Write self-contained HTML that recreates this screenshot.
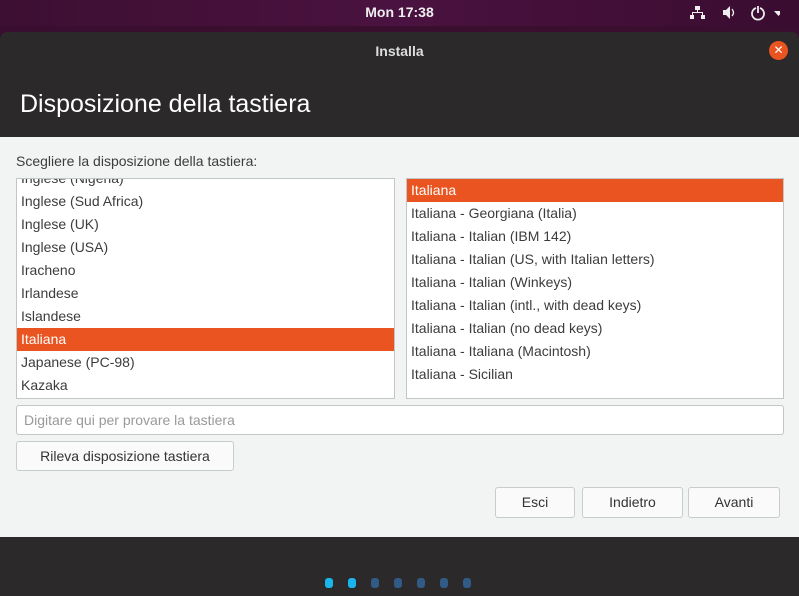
<!DOCTYPE html>
<html><head><style>
*{box-sizing:border-box;margin:0;padding:0}
body{width:799px;height:596px;overflow:hidden;background:#3a0e2e;font-family:"Liberation Sans","DejaVu Sans",sans-serif;position:relative;font-size:14px;color:#3c3c3c}
.top{position:absolute;left:0;top:0;width:799px;height:26px;background:linear-gradient(90deg,#3d0f32,#4a1240 50%,#3a0c30);}
.clock{position:absolute;left:0;width:799px;top:4px;text-align:center;color:#eee;font-size:14px;font-weight:bold}
.win{position:absolute;left:0;top:32px;width:799px;height:564px;background:#2b2929;border-radius:7px 7px 0 0}
.ttl{position:absolute;top:11px;width:100%;text-align:center;color:#ddd;font-weight:bold;font-size:14px}
.close{position:absolute;left:769px;top:9px;width:19px;height:19px;border-radius:50%;background:#e95420;color:#fff;font-size:12px;text-align:center;line-height:19px}
h1{position:absolute;left:20px;top:58px;color:#fff;font-weight:normal;font-size:25px}
.content{position:absolute;left:0;top:105px;width:799px;height:400px;background:#f2f3f3}
.a{position:absolute}
.list{position:absolute;background:#fff;border:1px solid #c2c6c6;overflow:hidden}
.row{position:absolute;left:0;right:0;height:23px;line-height:23px;padding-left:4px;white-space:nowrap}
.sel{background:#e95420;color:#fff}
.btn{position:absolute;border:1px solid #c7cccc;border-radius:3px;background:#fafafa;text-align:center;line-height:28px;color:#333}
.dot{position:absolute;top:578px;width:8px;height:10px;border-radius:3px;background:#325a86}
</style></head><body>
<div class="top"><div class="clock">Mon 17:38</div>
<svg class="a" style="left:690px;top:5px" width="90" height="16"><g fill="#eee"><rect x="5" y="1" width="5" height="4"/><rect x="7" y="5" width="1" height="3"/><rect x="2" y="7" width="11" height="1"/><rect x="2" y="7" width="1" height="3"/><rect x="12" y="7" width="1" height="3"/><rect x="0" y="10" width="4" height="4"/><rect x="11" y="10" width="4" height="4"/><path d="M33 5h3l4-4v13l-4-4h-3z"/></g><path d="M42 4q3 4 0 7" stroke="#eee" fill="none" stroke-width="1.3"/><path d="M66 3a6 6 0 1 0 4 0M68 1v7" stroke="#eee" fill="none" stroke-width="1.8"/><path d="M84 6h9l-4.5 5z" fill="#eee"/></svg>
</div>
<div class="win">
<div class="ttl">Installa</div><div class="close">✕</div>
<h1>Disposizione della tastiera</h1>
<div class="content">
<div class="a" style="left:16px;top:16px">Scegliere la disposizione della tastiera:</div>
<div class="list" style="left:16px;top:41px;width:379px;height:221px">
<div class="row" style="top:-12px">Inglese (Nigeria)</div>
<div class="row" style="top:11px">Inglese (Sud Africa)</div>
<div class="row" style="top:34px">Inglese (UK)</div>
<div class="row" style="top:57px">Inglese (USA)</div>
<div class="row" style="top:80px">Iracheno</div>
<div class="row" style="top:103px">Irlandese</div>
<div class="row" style="top:126px">Islandese</div>
<div class="row sel" style="top:149px">Italiana</div>
<div class="row" style="top:172px">Japanese (PC-98)</div>
<div class="row" style="top:195px">Kazaka</div>
</div>
<div class="list" style="left:406px;top:41px;width:378px;height:221px">
<div class="row sel" style="top:0">Italiana</div>
<div class="row" style="top:23px">Italiana - Georgiana (Italia)</div>
<div class="row" style="top:46px">Italiana - Italian (IBM 142)</div>
<div class="row" style="top:69px">Italiana - Italian (US, with Italian letters)</div>
<div class="row" style="top:92px">Italiana - Italian (Winkeys)</div>
<div class="row" style="top:115px">Italiana - Italian (intl., with dead keys)</div>
<div class="row" style="top:138px">Italiana - Italian (no dead keys)</div>
<div class="row" style="top:161px">Italiana - Italiana (Macintosh)</div>
<div class="row" style="top:184px">Italiana - Sicilian</div>
</div>
<div class="a" style="left:16px;top:268px;width:768px;height:30px;background:#fff;border:1px solid #c2c6c6;border-radius:3px;color:#999;padding-left:7px;line-height:28px">Digitare qui per provare la tastiera</div>
<div class="btn" style="left:16px;top:304px;width:218px;height:30px">Rileva disposizione tastiera</div>
<div class="btn" style="left:495px;top:350px;width:80px;height:31px">Esci</div>
<div class="btn" style="left:582px;top:350px;width:101px;height:31px">Indietro</div>
<div class="btn" style="left:688px;top:350px;width:92px;height:31px">Avanti</div>
</div>
</div>
<div class="dot" style="left:325px;background:#19b6ee"></div>
<div class="dot" style="left:348px;background:#19b6ee"></div>
<div class="dot" style="left:371px"></div>
<div class="dot" style="left:394px"></div>
<div class="dot" style="left:417px"></div>
<div class="dot" style="left:440px"></div>
<div class="dot" style="left:463px"></div>
</body></html>
